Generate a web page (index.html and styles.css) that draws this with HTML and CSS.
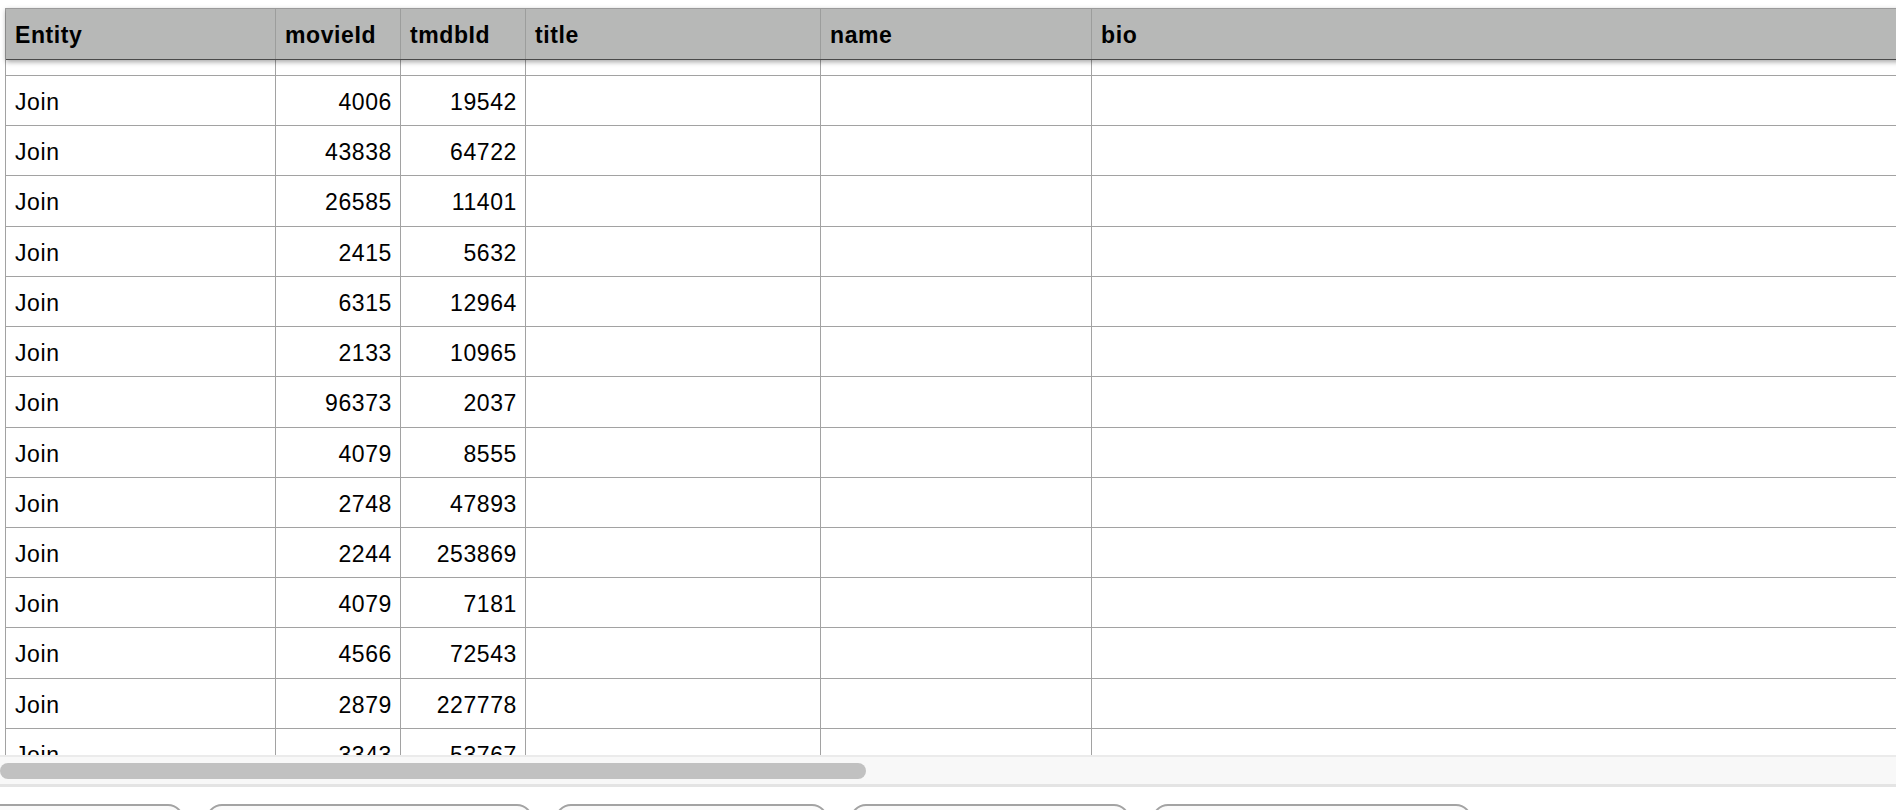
FILE: index.html
```html
<!DOCTYPE html>
<html>
<head>
<meta charset="utf-8">
<link rel="stylesheet" href="styles.css">
</head>
<body>
<div class="app">
  <div class="grid-wrap">
    <div class="grid">
      <div class="head">
        <div class="hc c1">Entity</div>
        <div class="hc c2">movieId</div>
        <div class="hc c3">tmdbId</div>
        <div class="hc c4">title</div>
        <div class="hc c5">name</div>
        <div class="hc c6">bio</div>
      </div>
      <div class="viewport">
        <div class="rows">
          <div class="row"><div class="cell c1"></div><div class="cell c2"></div><div class="cell c3"></div><div class="cell c4"></div><div class="cell c5"></div><div class="cell c6"></div></div>
          <div class="row"><div class="cell c1">Join</div><div class="cell c2 num">4006</div><div class="cell c3 num">19542</div><div class="cell c4"></div><div class="cell c5"></div><div class="cell c6"></div></div>
          <div class="row"><div class="cell c1">Join</div><div class="cell c2 num">43838</div><div class="cell c3 num">64722</div><div class="cell c4"></div><div class="cell c5"></div><div class="cell c6"></div></div>
          <div class="row"><div class="cell c1">Join</div><div class="cell c2 num">26585</div><div class="cell c3 num">11401</div><div class="cell c4"></div><div class="cell c5"></div><div class="cell c6"></div></div>
          <div class="row"><div class="cell c1">Join</div><div class="cell c2 num">2415</div><div class="cell c3 num">5632</div><div class="cell c4"></div><div class="cell c5"></div><div class="cell c6"></div></div>
          <div class="row"><div class="cell c1">Join</div><div class="cell c2 num">6315</div><div class="cell c3 num">12964</div><div class="cell c4"></div><div class="cell c5"></div><div class="cell c6"></div></div>
          <div class="row"><div class="cell c1">Join</div><div class="cell c2 num">2133</div><div class="cell c3 num">10965</div><div class="cell c4"></div><div class="cell c5"></div><div class="cell c6"></div></div>
          <div class="row"><div class="cell c1">Join</div><div class="cell c2 num">96373</div><div class="cell c3 num">2037</div><div class="cell c4"></div><div class="cell c5"></div><div class="cell c6"></div></div>
          <div class="row"><div class="cell c1">Join</div><div class="cell c2 num">4079</div><div class="cell c3 num">8555</div><div class="cell c4"></div><div class="cell c5"></div><div class="cell c6"></div></div>
          <div class="row"><div class="cell c1">Join</div><div class="cell c2 num">2748</div><div class="cell c3 num">47893</div><div class="cell c4"></div><div class="cell c5"></div><div class="cell c6"></div></div>
          <div class="row"><div class="cell c1">Join</div><div class="cell c2 num">2244</div><div class="cell c3 num">253869</div><div class="cell c4"></div><div class="cell c5"></div><div class="cell c6"></div></div>
          <div class="row"><div class="cell c1">Join</div><div class="cell c2 num">4079</div><div class="cell c3 num">7181</div><div class="cell c4"></div><div class="cell c5"></div><div class="cell c6"></div></div>
          <div class="row"><div class="cell c1">Join</div><div class="cell c2 num">4566</div><div class="cell c3 num">72543</div><div class="cell c4"></div><div class="cell c5"></div><div class="cell c6"></div></div>
          <div class="row"><div class="cell c1">Join</div><div class="cell c2 num">2879</div><div class="cell c3 num">227778</div><div class="cell c4"></div><div class="cell c5"></div><div class="cell c6"></div></div>
          <div class="row"><div class="cell c1">Join</div><div class="cell c2 num">3343</div><div class="cell c3 num">53767</div><div class="cell c4"></div><div class="cell c5"></div><div class="cell c6"></div></div>
        </div>
      </div>
    </div>
  </div>
  <div class="hscroll"><div class="thumb"></div></div>
  <div class="buttons">
    <div class="btn b1"></div>
    <div class="btn b2"></div>
    <div class="btn b3"></div>
    <div class="btn b4"></div>
    <div class="btn b5"></div>
  </div>
</div>
</body>
</html>
```

FILE: styles.css
```css
html, body {
  margin: 0;
  padding: 0;
  overflow: hidden;
  background: #ffffff;
  width: 1896px;
  height: 810px;
}

.app {
  display: flex;
  flex-direction: column;
  font-family: "Liberation Sans", Arial, Helvetica, sans-serif;
  color: #000;
  font-size: 23px;
  letter-spacing: 0.6px;
}

.grid-wrap {
  padding-top: 8px;
  padding-left: 5px;
  overflow: hidden;
  width: 1891px;
}

.grid {
  width: 2400px;
  border-left: 1px solid #a2a2a2;
  display: flex;
  flex-direction: column;
}

.head {
  display: flex;
  height: 52px;
  box-sizing: border-box;
  background: #b7b8b7;
  border-top: 1px solid #9a9a9a;
  border-bottom: 1px solid #4a4a4a;
  box-shadow: 0 2px 5px rgba(0, 0, 0, 0.35);
  position: relative;
  z-index: 2;
}

.hc {
  box-sizing: border-box;
  font-weight: bold;
  line-height: 50px;
  padding: 1px 0 0 9px;
  border-right: 1px solid #9c9d9c;
  white-space: nowrap;
}

.c1 { width: 270px; }
.c2 { width: 125px; }
.c3 { width: 125px; }
.c4 { width: 295px; }
.c5 { width: 271px; }
.c6 { width: 1314px; }

.viewport {
  height: 695px;
  overflow: hidden;
  position: relative;
  z-index: 1;
}

.rows {
  margin-top: -34.2px;
  display: flex;
  flex-direction: column;
}

.row {
  display: flex;
  height: 50.23px;
  box-sizing: border-box;
  border-bottom: 1px solid #a2a2a2;
  flex: none;
}

.cell {
  box-sizing: border-box;
  border-right: 1px solid #a2a2a2;
  padding: 4px 9px 0 9px;
  line-height: 45px;
  white-space: nowrap;
  overflow: hidden;
}

.num {
  text-align: right;
  padding-right: 8px;
}

.hscroll {
  height: 32px;
  box-sizing: border-box;
  background: #f8f8f8;
  border-top: 2px solid #ebebeb;
  border-bottom: 3px solid #e4e4e4;
  display: flex;
  align-items: center;
  padding-top: 1px;
}

.thumb {
  width: 866px;
  height: 16px;
  border-radius: 8px;
  background: #c1c1c1;
}

.buttons {
  display: flex;
  gap: 22px;
  padding-top: 17px;
  margin-left: -20px;
}

.btn {
  flex: none;
  height: 44px;
  box-sizing: border-box;
  border: 2px solid #a3a3a3;
  border-radius: 16px;
  background: #fafafa;
}

.b1 { width: 204px; }
.b2 { width: 327px; }
.b3 { width: 273px; }
.b4 { width: 280px; }
.b5 { width: 320px; }
```
